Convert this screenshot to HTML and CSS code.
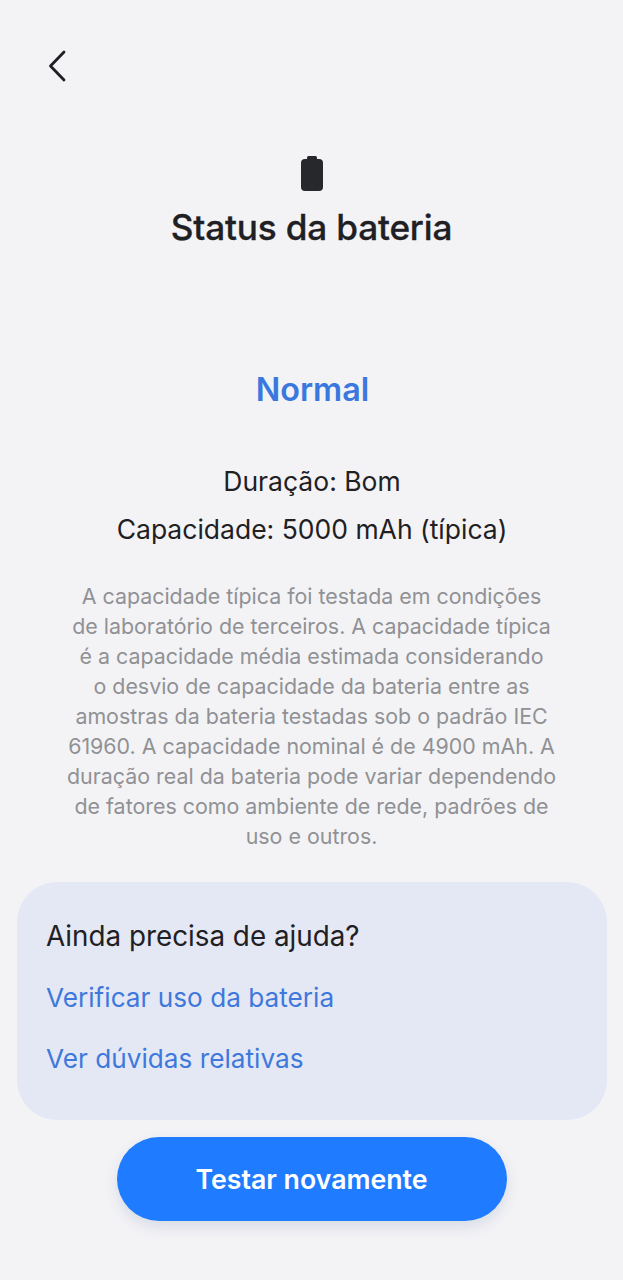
FILE: index.html
```html
<!doctype html>
<html lang="pt">
<head>
  <meta charset="utf-8" />
  <meta name="viewport" content="width=device-width,initial-scale=1" />
  <title>Status da bateria</title>
  <link rel="stylesheet" href="styles.css">
</head>
<body>
  <div class="screen">
    <div class="topbar">
      <svg class="back" width="20" height="34" viewBox="0 0 20 34" aria-label="Voltar">
        <path d="M17 3 L3.5 17 L17 31" fill="none" stroke="#1d1f24" stroke-width="2.8" stroke-linecap="round" stroke-linejoin="round"/>
      </svg>
    </div>

    <div class="head">
      <svg class="batt" width="24" height="36" viewBox="0 0 24 36">
        <rect x="7" y="0" width="10" height="5" rx="1.5" fill="#26282c"/>
        <rect x="1" y="3" width="22" height="32" rx="4" fill="#26282c"/>
      </svg>
      <h1>Status da bateria</h1>
    </div>

    <p class="status">Normal</p>

    <div class="specs">
      <p>Duração: Bom</p>
      <p>Capacidade: 5000 mAh (típica)</p>
    </div>

    <p class="desc">A capacidade típica foi testada em condições<br>de laboratório de terceiros. A capacidade típica<br>é a capacidade média estimada considerando<br>o desvio de capacidade da bateria entre as<br>amostras da bateria testadas sob o padrão IEC<br>61960. A capacidade nominal é de 4900 mAh. A<br>duração real da bateria pode variar dependendo<br>de fatores como ambiente de rede, padrões de<br>uso e outros.</p>

    <div class="help">
      <h2>Ainda precisa de ajuda?</h2>
      <a href="#">Verificar uso da bateria</a>
      <a href="#">Ver dúvidas relativas</a>
    </div>

    <div class="actions">
      <button type="button">Testar novamente</button>
    </div>
  </div>
</body>
</html>
```

FILE: styles.css
```css
:root{--bg:#f3f3f6;--card:#e3e8f4;--accent:#3f78dc;--btn:#1f7bff;--muted:#909194;--ink:#1f2024}
html,body{margin:0;height:100%}
body{background:var(--bg);color:var(--ink);font-family:Inter,"Noto Sans",Arial,sans-serif}
.screen{display:flex;flex-direction:column;min-height:1280px;box-sizing:border-box}
.topbar{padding:49px 0 0 47px;height:85px;box-sizing:border-box}
.back{display:block}
.head{display:flex;flex-direction:column;align-items:center;margin-top:71px}
.batt{display:block}
h1{margin:14px 0 0;font-size:35.2px;line-height:42px;font-weight:500;letter-spacing:-.2px;-webkit-text-stroke:.3px currentColor}
.status{margin:122px 0 0 2px;text-align:center;font-size:32.3px;line-height:40px;font-weight:600;color:#3a78e0}
.specs{margin:47px 0 0 1px;text-align:center;font-size:26.5px;line-height:48px}
.specs p{margin:0}
.desc{margin:28px 0 0;text-align:center;font-size:21.4px;line-height:30px;color:var(--muted)}
.help{margin:31px 16px 0 17px;padding:37px 29px 44px;border-radius:40px;background:var(--card);display:flex;flex-direction:column;gap:27px}
h2{margin:0 0 1px;font-size:27.8px;line-height:34px;font-weight:400}
.help a{color:var(--accent);font-size:26.2px;line-height:34px;text-decoration:none}
.actions{display:flex;justify-content:center;margin-top:17px}
button{width:390px;height:84px;border:0;border-radius:42px;background:var(--btn);color:#fff;font:600 26.7px Inter,"Noto Sans",Arial,sans-serif;box-shadow:0 6px 14px rgba(30,60,120,.12)}
```
